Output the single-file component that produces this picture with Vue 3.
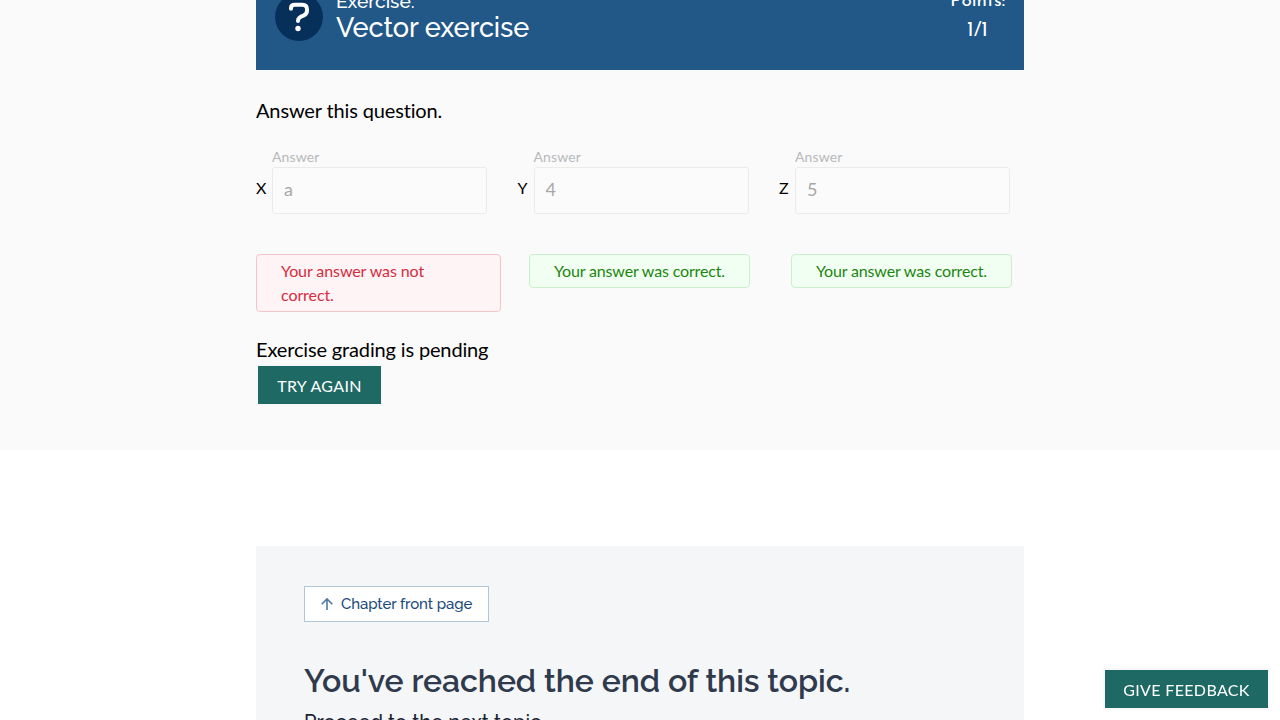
<script setup>
const answers = [
  { label: 'X', value: 'a', correct: false, message: 'Your answer was not correct.' },
  { label: 'Y', value: '4', correct: true, message: 'Your answer was correct.' },
  { label: 'Z', value: '5', correct: true, message: 'Your answer was correct.' },
]
</script>

<template>
  <div class="page">
    <section class="exercise">
      <div class="container">
        <header class="head">
          <svg class="badge" width="48" height="48" viewBox="0 0 48 48">
            <circle cx="24" cy="24" r="24" fill="#06305a" />
            <path d="M16 15.8 V15 Q16 11.8 20 11.8 H27.5 Q32 11.8 32 16.3 V17.8 Q32 21 28.4 22.6 Q23 24.6 23 27.6 V28" fill="none" stroke="#fff" stroke-width="4" stroke-linecap="round" stroke-linejoin="round" />
            <circle cx="23" cy="35.5" r="2.7" fill="#fff" />
          </svg>
          <h1 class="title"><span class="kind">Exercise:</span><span class="name">Vector exercise</span></h1>
          <div class="points"><span class="points-label">Points:</span><span class="score">1/1</span></div>
        </header>
        <p class="question">Answer this question.</p>
        <div class="fields">
          <div v-for="a in answers" :key="a.label" class="field">
            <span class="axis">{{ a.label }}</span>
            <label class="entry"><span class="caption">Answer</span><input :value="a.value" disabled /></label>
          </div>
        </div>
        <div class="results">
          <div v-for="a in answers" :key="a.label" class="result" :class="{ correct: a.correct }">{{ a.message }}</div>
        </div>
        <p class="pending">Exercise grading is pending</p>
        <button class="button again">TRY AGAIN</button>
      </div>
    </section>
    <section class="next">
      <a class="chapter">
        <svg width="12" height="12" viewBox="0 0 12 12"><path d="M6 12V1M.7 6.2 6 .9l5.3 5.3" fill="none" stroke="#4e7aa3" stroke-width="1.6" /></svg>
        <span>Chapter front page</span>
      </a>
      <h2>You've reached the end of this topic.</h2>
      <p class="proceed">Proceed to the next topic</p>
    </section>
    <button class="button feedback">GIVE FEEDBACK</button>
  </div>
</template>

<style>
body { margin: 0; background: #fff; overflow: hidden; }
</style>

<style scoped>
* { box-sizing: border-box; }
.page { height: 720px; overflow: hidden; font-family: Lato, sans-serif; color: #000; }
.exercise { height: 450px; background: #fafafa; display: flow-root; }
.container { width: 768px; margin: 0 auto; }
.head { height: 130px; margin-top: -60px; padding: 53px 18px 0 19px; background: #215887; color: #fff; display: flex; align-items: flex-start; }
.badge { flex: none; }
.title { margin: -4px 0 0 13px; font-weight: 500; flex: 1; font-family: Raleway, Lato, sans-serif; }
.kind { display: block; font-size: 19.2px; line-height: 24px; }
.name { display: block; font-size: 27.2px; line-height: 30px; margin-top: -1px; letter-spacing: -.1px; }
.points { display: flex; flex-direction: column; align-items: center; font-family: "Josefin Sans", Lato, sans-serif; font-size: 19px; line-height: 28px; margin: -5px 1px 0 0; }
.score { font-size: 20px; line-height: 30px; }
.question { margin: 25px 0 0; font-size: 20px; line-height: 30px; letter-spacing: -.14px; }
.fields { display: grid; grid-template-columns: repeat(3, 261.5px); margin-top: 24px; height: 65px; }
.field { display: flex; }
.axis { width: 16px; font-size: 16px; line-height: 24px; padding-top: 27px; }
.entry { width: 215.4px; opacity: .5; }
.caption { display: block; font-size: 14px; line-height: 15px; color: #74777c; height: 18px; letter-spacing: .15px; }
input { display: block; width: 100%; height: 47px; border: 1px solid #dedede; border-radius: 3px; background: #fcfcfc; color: #555; padding: 0 11px 3px; font: 18px Lato, sans-serif; }
.results { display: grid; grid-template-columns: 245px 221px 221px; column-gap: 28px; margin-top: 40px; align-items: start; height: 58px; }
.result { border: 1px solid #f3c4ca; border-radius: 4px; background: #fff4f5; color: #d52c40; padding: 4px 24px; font-size: 16px; line-height: 24px; letter-spacing: -.09px; }
.result.correct { background: #f1fff2; border-color: #c8f1cb; color: #1d8510; white-space: nowrap; letter-spacing: -.16px; }
.result:nth-child(3) { margin-left: 13px; width: 221px; }
.pending { margin: 22px 0 0; font-size: 20px; line-height: 30px; letter-spacing: -.15px; }
.button { display: block; border: 0; border-radius: 0; background: #1f6964; color: #fff; height: 38px; padding: 1px 0 0; font: 16px/24px Lato, sans-serif; letter-spacing: .35px; box-shadow: 0 0 0 2px #f7f8f9; }
.again { margin: 2px 0 0 2px; width: 123px; }
.next { width: 768px; height: 220px; margin: 96px auto 0; background: #f4f6f8; padding: 40px 48px 0; font-family: Raleway, Lato, sans-serif; }
.chapter { width: 185px; height: 36px; border: 1px solid #b0c5d8; background: #fff; display: flex; align-items: center; padding: 0 0 1px 16px; gap: 8px; color: #1a4a7d; font-size: 15px; font-weight: 500; white-space: nowrap; letter-spacing: -.08px; }
h2 { margin: 38px 0 0; font-size: 32px; line-height: 41px; font-weight: 600; color: #303a4d; white-space: nowrap; letter-spacing: -.05px; }
.proceed { margin: 7px 0 0; font-size: 20px; line-height: 28px; font-weight: 500; color: #1a2333; letter-spacing: .05px; }
.feedback { position: fixed; right: 12px; bottom: 12px; width: 163px; }
</style>
